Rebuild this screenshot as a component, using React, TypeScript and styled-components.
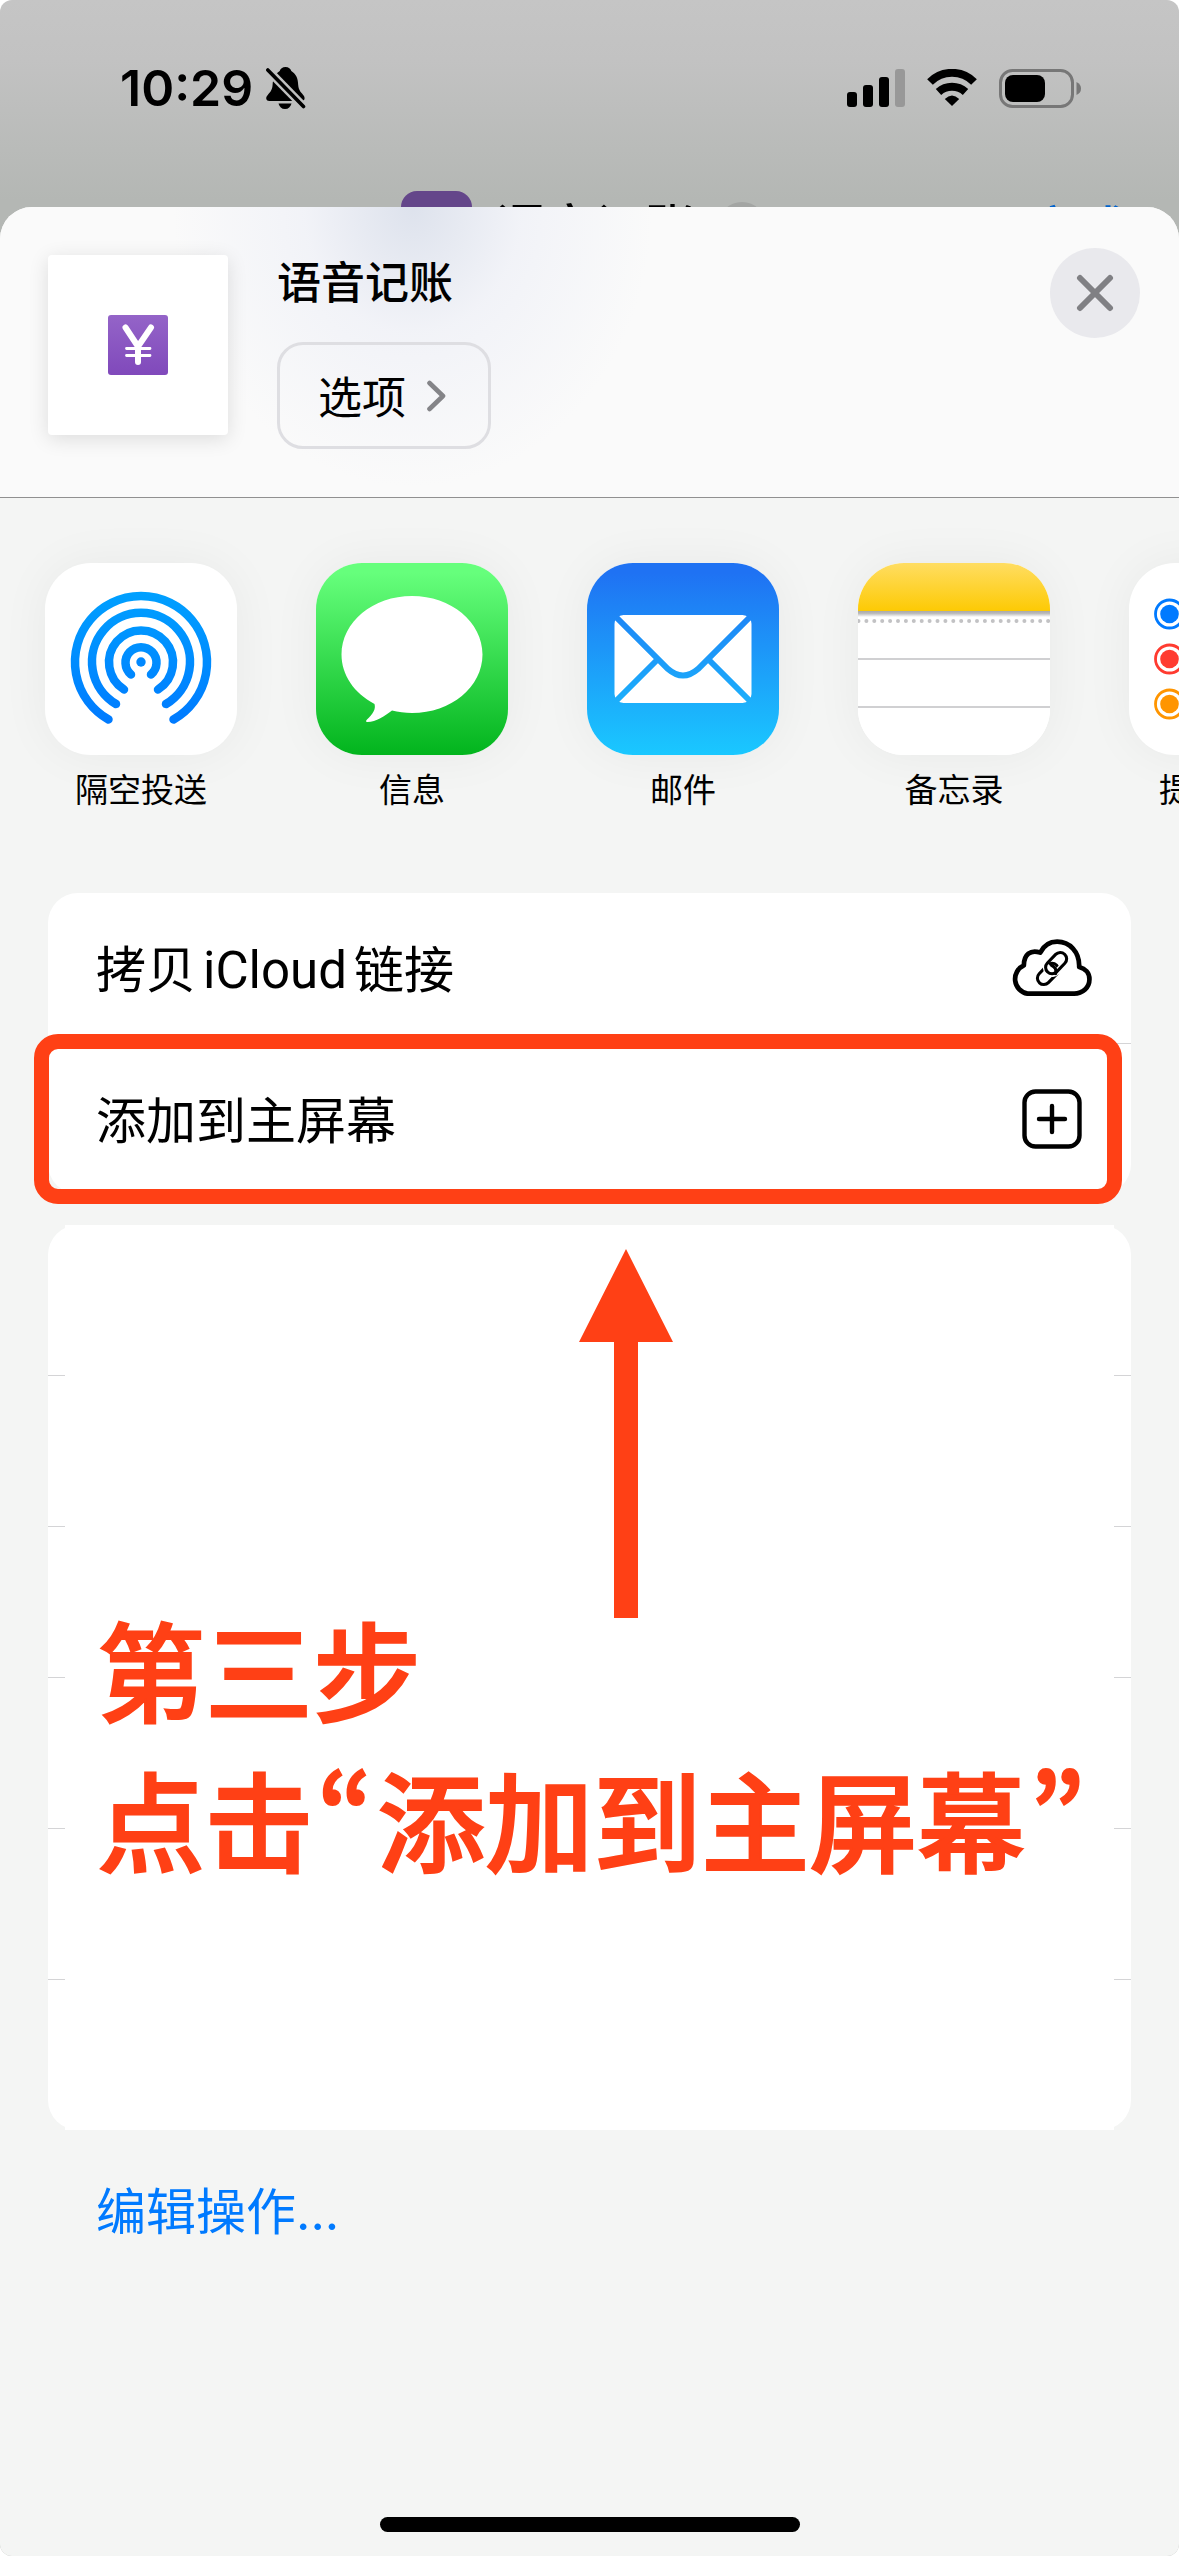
import React from "react";
import styled, { createGlobalStyle } from "styled-components";

const RED = "#ff4015";
const BLUE = "#007aff";

const GlobalStyle = createGlobalStyle`
  *, *::before, *::after { box-sizing: border-box; }
  body {
    margin: 0;
    background: #fff;
    color: #000;
    font-family: Inter, "Noto Sans CJK SC", sans-serif;
  }
  button { font: inherit; color: inherit; border: 0; padding: 0; background: none; cursor: pointer; }
  ul { list-style: none; margin: 0; padding: 0; }
  h1, p { margin: 0; }
  svg { display: block; flex: none; }
`;

const Screen = styled.div`
  min-height: 100vh;
  display: flex;
  flex-direction: column;
  overflow: hidden;
  border-radius: 12px;
  background: linear-gradient(#c5c5c5 0, #c2c2c2 60px, #b4b7b4 200px);
`;

const StatusBar = styled.header`
  height: 190px;
  padding: 0 98px 14px 120px;
  display: flex;
  align-items: center;
  justify-content: space-between;
`;

const StatusGroup = styled.div<{ $gap: number }>`
  display: flex;
  align-items: center;
  gap: ${(p) => p.$gap}px;
`;

const Clock = styled.time`
  font-size: 50px;
  line-height: 60px;
  font-weight: 600;
`;

const PageBar = styled.div`
  display: grid;
  grid-template-columns: 1fr auto 1fr;
  align-items: center;
  padding: 0 50px 0 38px;
  height: 71px;
  font-size: 50px;
  line-height: 64px;
  font-weight: 500;
`;

const PageTitle = styled.div`
  grid-column: 2;
  display: flex;
  align-items: center;
  gap: 23px;
`;

const PageName = styled.span`
  padding-top: 4px;
`;

const PageIcon = styled.span`
  width: 71px;
  height: 71px;
  border-radius: 16px;
  background: #64468a;
`;

const PageDot = styled.span`
  width: 48px;
  height: 48px;
  border-radius: 50%;
  background: #a3a5a3;
`;

const PageDone = styled.button`
  justify-self: end;
  padding-top: 8px;
  color: #0062cc;
`;

const Sheet = styled.main`
  position: relative;
  flex: 1;
  display: flex;
  flex-direction: column;
  margin-top: -54px;
  border-radius: 32px 32px 0 0;
  overflow: hidden;
  background: #f4f5f4;
`;

const SheetHeader = styled.header`
  display: flex;
  align-items: flex-start;
  justify-content: space-between;
  padding: 41px 39px 48px 48px;
  border-bottom: 1px solid #909090;
  background:
    radial-gradient(ellipse 240px 280px at 35% 0, rgba(220, 225, 236, 0.95), rgba(236, 238, 246, 0.6) 45%, rgba(250, 250, 250, 0)),
    #fafafa;
`;

const Subject = styled.div`
  display: flex;
  gap: 49px;
  padding-top: 7px;
`;

const Thumbnail = styled.div`
  width: 180px;
  height: 180px;
  display: grid;
  place-items: center;
  border-radius: 4px;
  background: #fff;
  box-shadow: 0 4px 20px rgba(0, 0, 0, 0.12);
`;

const SubjectText = styled.div`
  display: flex;
  flex-direction: column;
  align-items: flex-start;
  gap: 31px;
`;

const Title = styled.h1`
  font-size: 44px;
  line-height: 56px;
  font-weight: 500;
`;

const OptionsButton = styled.button`
  display: flex;
  align-items: center;
  gap: 21px;
  height: 107px;
  padding: 0 42px 0 38px;
  border: 3px solid #dedee2;
  border-radius: 26px;
  font-size: 44px;
  line-height: 56px;
`;

const CloseButton = styled.button`
  width: 90px;
  height: 90px;
  display: grid;
  place-items: center;
  border-radius: 50%;
  background: #e9e9ed;
`;

const Apps = styled.ul`
  display: flex;
  gap: 79px;
  padding: 65px 45px 83px;
  overflow: hidden;
`;

const AppButton = styled.button`
  display: flex;
  flex-direction: column;
  align-items: center;
  gap: 15px;
  width: 192px;
  font-size: 33px;
  line-height: 40px;
`;

const AppTile = styled.span`
  width: 192px;
  height: 192px;
  border-radius: 46px;
  overflow: hidden;
  background: #fff;
  box-shadow: 0 0 50px rgba(0, 0, 0, 0.05);
`;

const Card = styled.ul`
  position: relative;
  margin: 0 48px 31px;
  border-radius: 30px;
  background: #fff;
`;

const CardItem = styled.li`
  position: relative;
  height: 150px;
  & + & { height: 151px; border-top: 1px solid #d4d4d6; }
`;

const Action = styled.button`
  width: 100%;
  height: 100%;
  display: flex;
  align-items: center;
  justify-content: space-between;
  padding: 0 39px 0 48px;
  font-size: 50px;
  line-height: 64px;
`;

const ButtonLabel = styled.span`
  padding-top: 4px;
`;

const Latin = styled.span`
  margin: 0 7px;
  font-family: Roboto, Inter, sans-serif;
  font-size: 51px;
`;

const Highlight = styled.span`
  position: absolute;
  inset: -10px 9px -10px -14px;
  border: 15px solid ${RED};
  border-radius: 24px;
  pointer-events: none;
`;

const Note = styled.div`
  position: absolute;
  inset: 0 17px;
  padding-top: 24px;
  background: #fff;
  color: ${RED};
  font-family: "Noto Sans CJK SC", sans-serif;
  font-size: 108px;
  line-height: 150px;
  font-weight: 500;
  -webkit-text-stroke: 2px ${RED};
  white-space: nowrap;
`;

const NoteArrow = styled.svg`
  margin: 0 0 -26px 49%;
`;

const NoteLine = styled.p`
  padding-left: 32px;
`;

const Quote = styled.span`
  font-feature-settings: "pwid";
  margin: 0 4px;
`;

const EditButton = styled.button`
  align-self: flex-start;
  margin: 21px 96px 0;
  color: ${BLUE};
  font-size: 50px;
  line-height: 60px;
`;

const HomeBar = styled.div`
  width: 420px;
  height: 15px;
  margin: auto auto 24px;
  border-radius: 8px;
  background: #000;
`;

const BellOff = () => (
  <svg width="40" height="44" viewBox="0 0 40 44" aria-hidden="true">
    <mask id="bell-cut">
      <rect width="40" height="44" fill="#fff" />
      <path d="M-3 -1 L42 45" stroke="#000" strokeWidth="8.5" />
    </mask>
    <g mask="url(#bell-cut)">
      <path d="M19.5 1C22.5 1 24.8 3 25.3 5C30 8 32 12 32.2 19C32.5 25 36 27 38 30C39.5 33 38 35 35.5 35H3.5C0 35-.5 32 1 30C3 27 6.3 25 6.6 19C7 12 9 8 13.7 5C14.2 3 16.5 1 19.5 1Z" />
    </g>
    <path d="M12.5 37.5H25.5C24.5 41 22.5 43 19 43S13.5 41 12.5 37.5Z" />
    <path d="M1.8 4L37.5 40.5" stroke="#000" strokeWidth="3.6" strokeLinecap="round" />
  </svg>
);

const Signal = () => (
  <svg width="58" height="38" viewBox="0 0 58 38" aria-hidden="true">
    <rect x="0" y="23" width="10" height="15" rx="3" />
    <rect x="16" y="16" width="10" height="22" rx="3" />
    <rect x="32" y="8" width="10" height="30" rx="3" />
    <rect x="48" y="0" width="10" height="38" rx="3" fill="#989898" />
  </svg>
);

const Wifi = () => (
  <svg width="50" height="38" viewBox="0 0 50 38" fill="none" stroke="#000" strokeWidth="8" aria-hidden="true">
    <path d="M3 13A31 31 0 0 1 47 13" />
    <path d="M11.5 23A20 20 0 0 1 38.5 23" />
    <path d="M25 37L17.8 30Q25 23 32.2 30Z" fill="#000" stroke="none" />
  </svg>
);

const Battery = () => (
  <svg width="82" height="39" viewBox="0 0 82 39" aria-hidden="true">
    <rect x="1.5" y="1.5" width="72" height="36" rx="12" fill="none" stroke="#777" strokeWidth="3" />
    <rect x="6" y="6" width="40" height="27" rx="8" />
    <path d="M77.5 13Q82 15 82 19.5T77.5 26Z" fill="#777" />
  </svg>
);

const YenLogo = () => (
  <svg width="60" height="60" viewBox="0 0 60 60" aria-hidden="true">
    <linearGradient id="yen" x1="0" y1="0" x2="0" y2="1">
      <stop offset="0" stopColor="#9464c8" />
      <stop offset="1" stopColor="#8049bb" />
    </linearGradient>
    <rect width="60" height="60" rx="3" fill="url(#yen)" />
    <g fill="none" stroke="#fff" strokeLinecap="round" strokeLinejoin="round">
      <path d="M17.5 12.5L30 31.5L43 12.5M30 31.5V47" strokeWidth="6" />
      <path d="M18.5 33.5H42M18.5 40.5H42" strokeWidth="2.8" />
    </g>
  </svg>
);

const Chevron = () => (
  <svg width="19" height="32" viewBox="0 0 19 32" fill="none" stroke="#848488" strokeWidth="4.6" strokeLinecap="round" strokeLinejoin="round" aria-hidden="true">
    <path d="M2.5 3L16 16L2.5 29" />
  </svg>
);

const Cross = () => (
  <svg width="38" height="38" viewBox="0 0 38 38" stroke="#808084" strokeWidth="6" strokeLinecap="round" aria-hidden="true">
    <path d="M4 4L34 34M34 4L4 34" />
  </svg>
);

const AirDropArt = () => (
  <svg width="192" height="192" viewBox="0 0 192 192" fill="none" aria-hidden="true">
    <linearGradient id="air" gradientUnits="userSpaceOnUse" x1="0" y1="29" x2="0" y2="162">
      <stop offset="0" stopColor="#00a0ff" />
      <stop offset="1" stopColor="#007aff" />
    </linearGradient>
    <g stroke="url(#air)" strokeWidth="8.5" strokeLinecap="round">
      <path d="M63.5 156.5A66 66 0 1 1 128.5 156.5" />
      <path d="M71 141A49 49 0 1 1 121 141" />
      <path d="M79 126.5A32 32 0 1 1 113 126.5" />
      <path d="M86 111.5A15.5 15.5 0 1 1 106 111.5" />
    </g>
    <circle cx="96" cy="99" r="4.7" fill="#0088ff" />
  </svg>
);

const MessagesArt = () => (
  <svg width="192" height="192" viewBox="0 0 192 192" aria-hidden="true">
    <linearGradient id="msg" x1="0" y1="0" x2="0" y2="1">
      <stop offset="0.05" stopColor="#66ff7c" />
      <stop offset="1" stopColor="#02b41d" />
    </linearGradient>
    <rect width="192" height="192" fill="url(#msg)" />
    <path fill="#fff" d="M96 33C135 33 166.5 59 166.5 91.5S135 150 96 150C89 150 82 149 76 147.5C69 153 60 159 51.5 159C49.5 159 50 157.5 51 156.5C57 151 60 146 58.5 141C38 130 25.5 112 25.5 91.5C25.5 59 57 33 96 33Z" />
  </svg>
);

const MailArt = () => (
  <svg width="192" height="192" viewBox="0 0 192 192" aria-hidden="true">
    <linearGradient id="mail" gradientUnits="userSpaceOnUse" x1="0" y1="0" x2="0" y2="192">
      <stop offset="0.05" stopColor="#1f72f3" />
      <stop offset="1" stopColor="#1ac8ff" />
    </linearGradient>
    <rect width="192" height="192" fill="url(#mail)" />
    <rect x="27.5" y="52" width="137" height="88" rx="9" fill="#fff" />
    <g fill="none" stroke="url(#mail)" strokeWidth="6">
      <path d="M27 52L81 106Q96 119 111 106L165 52" />
      <path d="M71 96L27 140M121 96L165 140" />
    </g>
  </svg>
);

const NotesArt = () => (
  <svg width="192" height="192" viewBox="0 0 192 192" aria-hidden="true">
    <linearGradient id="note" x1="0" y1="0" x2="0" y2="1">
      <stop offset="0" stopColor="#ffdd62" />
      <stop offset="1" stopColor="#fdca04" />
    </linearGradient>
    <linearGradient id="fold" x1="0" y1="0" x2="0" y2="1">
      <stop offset="0" stopColor="#a9a9a9" />
      <stop offset="0.4" stopColor="#bbb" />
      <stop offset="1" stopColor="#fff" />
    </linearGradient>
    <rect width="192" height="192" fill="#fff" />
    <rect width="192" height="48" fill="url(#note)" />
    <rect y="48" width="192" height="6" fill="url(#fold)" />
    <path d="M.5 58H192" stroke="#c2c2c4" strokeWidth="4" strokeLinecap="round" strokeDasharray="0 7.9" />
    <path d="M0 96H192M0 144H192" stroke="#d0d0d2" strokeWidth="2" />
  </svg>
);

const RemindersArt = () => (
  <svg width="192" height="192" viewBox="0 0 192 192" aria-hidden="true">
    {[BLUE, "#ff3b30", "#ff9500"].map((color, i) => (
      <g key={color}>
        <circle cx="40.5" cy={51 + i * 45} r="14" fill="none" stroke={color} strokeWidth="2.8" />
        <circle cx="40.5" cy={51 + i * 45} r="9.3" fill={color} />
        <path d={`M66 ${51 + i * 45}H192`} stroke="#c8c8ca" strokeWidth="2" />
      </g>
    ))}
  </svg>
);

const CloudLink = () => (
  <svg width="82" height="58" viewBox="0 0 80 56" fill="none" stroke="#000" aria-hidden="true">
    <path
      strokeWidth="4.6"
      strokeLinejoin="round"
      d="M17 53A14.5 14.5 0 0 1 13.5 25.5C13.5 15 20 9.5 29.5 13C33 6 39 2.3 46 2.3C58 2.3 68 12 67.5 27C73.5 28.5 77.5 33 77.5 39C77.5 47 71 53 62.5 53Z"
    />
    <g strokeWidth="3" strokeLinecap="round">
      <rect x="25" y="27.5" width="24" height="12.5" rx="6.2" transform="rotate(-46 37 33.75)" />
      <path d="M50.5 26L45 31.5A6.2 6.2 0 0 1 35.5 23.5" stroke="#fff" strokeWidth="6" strokeLinecap="butt" transform="translate(1 0)" />
      <rect x="33" y="17" width="24" height="12.5" rx="6.2" transform="rotate(-46 45 23.25)" />
      <path d="M40.5 25.5Q46 28 44.5 33.5" />
    </g>
  </svg>
);

const PlusSquare = () => (
  <svg width="82" height="60" viewBox="0 0 82 60" fill="none" stroke="#000" strokeWidth="4.4" strokeLinecap="round" aria-hidden="true">
    <rect x="14.5" y="2.5" width="55" height="55" rx="11" />
    <path d="M42 17V43M29 30H55" />
  </svg>
);

const apps = [
  { name: "隔空投送", Art: AirDropArt },
  { name: "信息", Art: MessagesArt },
  { name: "邮件", Art: MailArt },
  { name: "备忘录", Art: NotesArt },
  { name: "提醒事项", Art: RemindersArt },
];

export default function App() {
  return (
    <Screen lang="zh-CN">
      <GlobalStyle />
      <StatusBar>
        <StatusGroup $gap={13}>
          <Clock>10:29</Clock>
          <BellOff />
        </StatusGroup>
        <StatusGroup $gap={22}>
          <Signal />
          <Wifi />
          <Battery />
        </StatusGroup>
      </StatusBar>

      <PageBar>
        <PageTitle>
          <PageIcon />
          <PageName>语音记账</PageName>
          <PageDot />
        </PageTitle>
        <PageDone type="button">完成</PageDone>
      </PageBar>

      <Sheet>
        <SheetHeader>
          <Subject>
            <Thumbnail>
              <YenLogo />
            </Thumbnail>
            <SubjectText>
              <Title>语音记账</Title>
              <OptionsButton type="button">
                <ButtonLabel>选项</ButtonLabel>
                <Chevron />
              </OptionsButton>
            </SubjectText>
          </Subject>
          <CloseButton type="button" aria-label="关闭">
            <Cross />
          </CloseButton>
        </SheetHeader>

        <Apps>
          {apps.map(({ name, Art }) => (
            <li key={name}>
              <AppButton type="button">
                <AppTile>
                  <Art />
                </AppTile>
                {name}
              </AppButton>
            </li>
          ))}
        </Apps>

        <Card>
          <CardItem>
            <Action type="button">
              <ButtonLabel>
                拷贝<Latin>iCloud</Latin>链接
              </ButtonLabel>
              <CloudLink />
            </Action>
          </CardItem>
          <CardItem>
            <Action type="button">
              <ButtonLabel>添加到主屏幕</ButtonLabel>
              <PlusSquare />
            </Action>
            <Highlight />
          </CardItem>
        </Card>

        <Card as="section">
          {[0, 1, 2, 3, 4, 5].map((row) => (
            <CardItem as="div" key={row} />
          ))}
          <Note>
            <NoteArrow width="94" height="369" viewBox="0 0 94 369" fill={RED} aria-hidden="true">
              <path d="M47 0L94 93H59V369H35V93H0Z" />
            </NoteArrow>
            <NoteLine>第三步</NoteLine>
            <NoteLine>
              点击<Quote>“</Quote>添加到主屏幕<Quote>”</Quote>
            </NoteLine>
          </Note>
        </Card>

        <EditButton type="button">编辑操作...</EditButton>
        <HomeBar />
      </Sheet>
    </Screen>
  );
}
